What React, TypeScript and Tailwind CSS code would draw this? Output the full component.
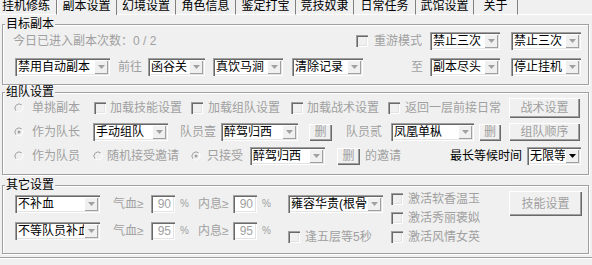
import React from 'react';

// classic win32 3D edges
const sunken =
    'shadow-[inset_1px_1px_0_#a0a0a0,inset_2px_2px_0_#696969,inset_-1px_-1px_0_#fff,inset_-2px_-2px_0_#e3e3e3]';
const raised =
    'shadow-[inset_1px_1px_0_#fff,inset_-1px_-1px_0_#696969,inset_-2px_-2px_0_#a0a0a0]';

const tabs: { label: string; w: string; active?: boolean }[] = [
    { label: '挂机修练', w: 'w-[57px] justify-start pl-[2px]' },
    { label: '副本设置', w: 'w-[60px] justify-center', active: true },
    { label: '幻境设置', w: 'w-[59px] justify-center' },
    { label: '角色信息', w: 'w-[60px] justify-center' },
    { label: '鉴定打宝', w: 'w-[60px] justify-center' },
    { label: '竞技奴隶', w: 'w-[58px] justify-center' },
    { label: '日常任务', w: 'w-[62px] justify-center' },
    { label: '武馆设置', w: 'w-[58px] justify-center' },
    { label: '关于', w: 'w-[44px] justify-center' },
];

const Label: React.FC<{ className?: string; children: React.ReactNode }> = ({ className = '', children }) => (
    <span className={`shrink-0 whitespace-nowrap leading-[14px] ${className}`}>{children}</span>
);

const Combo: React.FC<{ text: string; className?: string; on?: boolean }> = ({ text, className = '', on = false }) => (
    <div className={`flex h-[18px] shrink-0 items-stretch bg-white p-[2px] ${sunken} ${className}`}>
        <span className="min-w-0 flex-1 overflow-hidden whitespace-nowrap pl-[1px] leading-[14px] text-black">
            {text}
        </span>
        <span className="flex w-[14px] shrink-0 items-center justify-center bg-[#f0f0f0] shadow-[inset_1px_1px_0_#fff,inset_-1px_-1px_0_#a0a0a0]">
            <svg width="7" height="4" viewBox="0 0 7 4">
                <path d="M0 0h7L3.5 4z" fill={on ? '#000' : '#a0a0a0'} />
            </svg>
        </span>
    </div>
);

const CheckBox: React.FC<{ className?: string }> = ({ className = '' }) => (
    <span className={`block h-[12px] w-[12px] shrink-0 bg-[#f0f0f0] ${sunken} ${className}`} />
);

const Radio: React.FC<{ on?: boolean; className?: string }> = ({ on = false, className = '' }) => (
    <svg width="12" height="12" viewBox="0 0 12 12" className={`shrink-0 ${className}`}>
        <circle cx="6" cy="6" r="4" fill="#f0f0f0" />
        <path d="M3.17 8.83A4 4 0 0 1 8.83 3.17" fill="none" stroke="#a0a0a0" />
        <path d="M8.83 3.17A4 4 0 0 1 3.17 8.83" fill="none" stroke="#fff" />
        {on && <circle cx="6" cy="6" r="1.5" fill="#a0a0a0" />}
    </svg>
);

const Btn: React.FC<{ text: string; className?: string }> = ({ text, className = '' }) => (
    <div
        className={`flex shrink-0 items-center justify-center bg-[#f0f0f0] leading-[14px] text-[#a0a0a0] ${raised} ${className}`}
    >
        {text}
    </div>
);

const NumBox: React.FC<{ value: string; className?: string }> = ({ value, className = '' }) => (
    <div
        className={`flex h-[18px] w-[24px] shrink-0 items-center justify-end bg-white pr-[4px] leading-[14px] text-[#a0a0a0] ${sunken} ${className}`}
    >
        {value}
    </div>
);

const Group: React.FC<{ title: string; className?: string; children: React.ReactNode }> = ({
    title,
    className = '',
    children,
}) => (
    <div
        className={`ml-[2px] w-[587px] shrink-0 border border-[#a0a0a0] shadow-[1px_1px_0_#fff,inset_1px_1px_0_#fff] ${className}`}
    >
        <div className="-mt-[7px] ml-[2px] h-[12px] w-fit bg-[#f0f0f0] px-[1px] leading-[12px] text-black">
            {title}
        </div>
        {children}
    </div>
);

const HpRow: React.FC<{ combo: string; hp: string; mp: string; className?: string }> = ({ combo, hp, mp, className = '' }) => (
    <div className={`flex h-[18px] items-center text-[#a0a0a0] ${className}`}>
        <Combo text={combo} className="ml-[12px] w-[85px]" />
        <Label className="ml-[13px] w-[34px]">气血≥</Label>
        <NumBox className="ml-[4px]" value={hp} />
        <Label className="ml-[5px] w-[8px] text-[10px]">%</Label>
        <Label className="ml-[10px] w-[32px]">内息≥</Label>
        <NumBox className="ml-[3px]" value={mp} />
        <Label className="ml-[5px] w-[8px] text-[10px]">%</Label>
    </div>
);

export default function App() {
    return (
        <div className="flex h-[265px] w-[592px] flex-col overflow-hidden bg-[#f0f0f0] font-['Liberation_Sans','Noto_Sans_CJK_SC',sans-serif] text-[12px] text-black">
            {/* 标签页 */}
            <div className="flex h-[15px] shrink-0">
                {tabs.map((t) => (
                    <div
                        key={t.label}
                        className={`flex h-[15px] shrink-0 items-start whitespace-nowrap border-r border-r-[#808080] leading-[12px] ${t.w} ${
                            t.active ? 'shadow-[inset_1px_0_0_#fff]' : 'border-b border-b-white'
                        }`}
                    >
                        {t.label}
                    </div>
                ))}
                <div className="flex-1 border-b border-b-white" />
            </div>

            {/* 目标副本 */}
            <Group title="目标副本" className="mt-[9px] h-[61px]">
                <div className="mt-[2px] flex h-[18px] items-center text-[#a0a0a0]">
                    <Label className="ml-[10px] w-[150px]">今日已进入副本次数：0 / 2</Label>
                    <CheckBox className="ml-[193px]" />
                    <Label className="ml-[6px] w-[48px]">重游模式</Label>
                    <Combo text="禁止三次" className="ml-[8px] w-[70px]" />
                    <Combo text="禁止三次" className="ml-[11px] w-[70px]" />
                </div>
                <div className="mt-[8px] flex h-[18px] items-center text-[#a0a0a0]">
                    <Combo text="禁用自动副本" className="ml-[12px] w-[95px]" />
                    <Label className="ml-[8px] w-[24px]">前往</Label>
                    <Combo text="函谷关" className="ml-[6px] w-[57px]" />
                    <Combo text="真饮马涧" className="ml-[8px] w-[70px]" />
                    <Combo text="清除记录" className="ml-[9px] w-[71px]" />
                    <Label className="ml-[48px] w-[12px]">至</Label>
                    <Combo text="副本尽头" className="ml-[7px] w-[70px]" />
                    <Combo text="停止挂机" className="ml-[11px] w-[70px]" />
                </div>
            </Group>

            {/* 组队设置 */}
            <Group title="组队设置" className="mt-[7px] h-[83px]">
                <div className="flex h-[20px] items-center text-[#a0a0a0]">
                    <Radio className="ml-[10px]" />
                    <Label className="ml-[7px] w-[48px]">单挑副本</Label>
                    <CheckBox className="ml-[14px]" />
                    <Label className="ml-[4px] w-[72px]">加载技能设置</Label>
                    <CheckBox className="ml-[9px]" />
                    <Label className="ml-[5px] w-[72px]">加载组队设置</Label>
                    <CheckBox className="ml-[11px]" />
                    <Label className="ml-[4px] w-[72px]">加载战术设置</Label>
                    <CheckBox className="ml-[9px]" />
                    <Label className="ml-[5px] w-[96px]">返回一层前接日常</Label>
                    <Btn text="战术设置" className="ml-[8px] h-[20px] w-[71px]" />
                </div>
                <div className="mt-[5px] flex h-[18px] items-center text-[#a0a0a0]">
                    <Radio on className="ml-[10px]" />
                    <Label className="ml-[7px] w-[48px]">作为队长</Label>
                    <Combo text="手动组队" className="ml-[13px] w-[75px]" />
                    <Label className="ml-[12px] w-[36px]">队员壹</Label>
                    <Combo text="醉驾归西" className="ml-[5px] w-[77px]" />
                    <Btn text="删" className="ml-[11px] h-[17px] w-[23px]" />
                    <Label className="ml-[14px] w-[36px]">队员贰</Label>
                    <Combo text="凤凰单枞" className="ml-[9px] w-[83px]" />
                    <Btn text="删" className="ml-[5px] h-[17px] w-[22px]" />
                    <Btn text="组队顺序" className="ml-[8px] h-[18px] w-[71px]" />
                </div>
                <div className="mt-[6px] flex h-[18px] items-center text-[#a0a0a0]">
                    <Radio className="ml-[10px]" />
                    <Label className="ml-[7px] w-[48px]">作为队员</Label>
                    <Radio className="ml-[12px]" />
                    <Label className="ml-[3px] w-[72px]">随机接受邀请</Label>
                    <Radio on className="ml-[11px]" />
                    <Label className="ml-[5px] w-[36px]">只接受</Label>
                    <Combo text="醉驾归西" className="ml-[7px] w-[75px]" />
                    <Btn text="删" className="ml-[12px] h-[17px] w-[23px]" />
                    <Label className="ml-[5px] w-[36px]">的邀请</Label>
                    <Label className="ml-[49px] w-[72px] text-black">最长等候时间</Label>
                    <Combo text="无限等" on className="ml-[5px] w-[54px]" />
                </div>
            </Group>

            {/* 其它设置 */}
            <Group title="其它设置" className="mt-[10px] h-[69px]">
                <div className="flex items-start text-[#a0a0a0]">
                    <div className="flex flex-col">
                        <HpRow combo="不补血" hp="90" mp="90" className="mt-[4px]" />
                        <HpRow combo="不等队员补血" hp="95" mp="95" className="mt-[9px]" />
                    </div>
                    <div className="ml-[18px] flex w-[95px] flex-col">
                        <Combo text="雍容华贵(根骨" className="mt-[4px] w-[95px]" />
                        <div className="mt-[17px] flex h-[14px] items-center">
                            <CheckBox />
                            <Label className="ml-[5px]">逢五层等5秒</Label>
                        </div>
                    </div>
                    <div className="ml-[8px] flex w-[89px] flex-col">
                        <div className="mt-[1px] flex h-[14px] items-center">
                            <CheckBox />
                            <Label className="ml-[5px]">激活软香温玉</Label>
                        </div>
                        <div className="mt-[5px] flex h-[14px] items-center">
                            <CheckBox />
                            <Label className="ml-[5px]">激活秀丽褒姒</Label>
                        </div>
                        <div className="mt-[5px] flex h-[14px] items-center">
                            <CheckBox />
                            <Label className="ml-[5px]">激活风情女英</Label>
                        </div>
                    </div>
                    <Btn text="技能设置" className="ml-[29px] h-[25px] w-[73px]" />
                </div>
            </Group>

            <div className="mt-[3px] h-[2px] w-full shrink-0 border-t border-t-[#a0a0a0] bg-white" />
        </div>
    );
}
